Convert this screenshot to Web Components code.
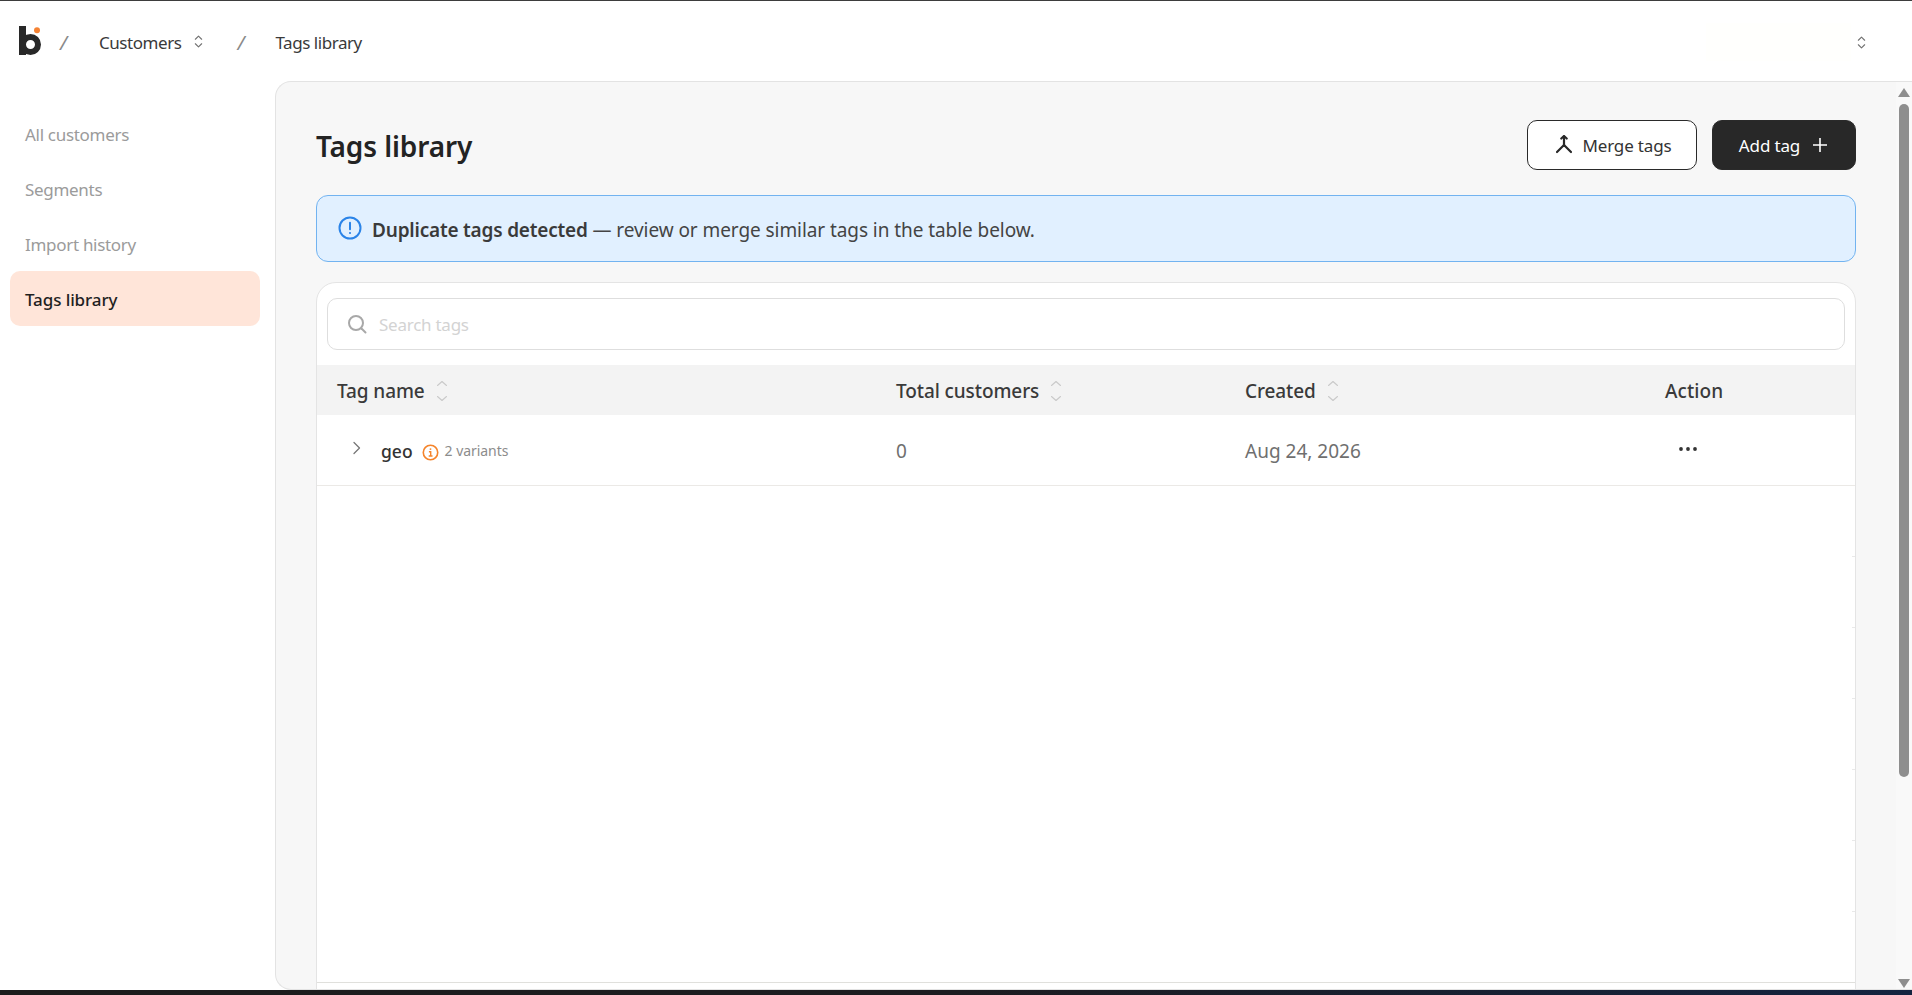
<!DOCTYPE html>
<html>
<head>
<meta charset="utf-8">
<title>Tags library</title>
<style>
html, body { margin: 0; height: 100%; overflow: hidden; background: #fff; }
body { font-family: "Noto Sans", "Open Sans", sans-serif; }
</style>
</head>
<body>
<app-shell>
  <top-bar slot="top"></top-bar>
  <side-nav slot="side">
    <nav-item>All customers</nav-item>
    <nav-item>Segments</nav-item>
    <nav-item>Import history</nav-item>
    <nav-item active>Tags library</nav-item>
  </side-nav>
  <page-panel slot="main" heading="Tags library">
    <action-button slot="actions" icon="merge" style="width:170px">Merge tags</action-button>
    <action-button slot="actions" icon="plus" dark style="width:144px">Add tag</action-button>
    <notice-banner><b>Duplicate tags detected</b> — review or merge similar tags in the table below.</notice-banner>
    <tag-table>
      <tag-row name="geo" variants="2 variants" total="0" created="Aug 24, 2026"></tag-row>
    </tag-table>
  </page-panel>
</app-shell>
<script>
const chevrons = (color) => `
<svg width="9" height="13" viewBox="0 0 10 14" fill="none" stroke="${color}" stroke-width="1.2" stroke-linecap="round" stroke-linejoin="round">
  <path d="M1.5 4.5 5 1l3.500 3.500"/><path d="M1.500 9.500 5 13l3.500-3.500"/>
</svg>`

class AppShell extends HTMLElement {
  connectedCallback() {
    const shadow = this.attachShadow({mode: 'open'})
    shadow.innerHTML = `
<style>
:host { display: flex; flex-direction: column; height: 995px; border-top: 1px solid #3d3d3d; box-sizing: border-box; }
.top { height: 80px; flex: none; }
.body { flex: 1; display: flex; min-height: 0; }
.bar { height: 5px; flex: none; background: linear-gradient(90deg, #1c1c1c, #1c1c20 50%, #14233f); }
</style>
<div class="top"><slot name="top"></slot></div>
<div class="body"><slot name="side"></slot><slot name="main"></slot></div>
<div class="bar"></div>`
  }
}

class TopBar extends HTMLElement {
  connectedCallback() {
    const shadow = this.attachShadow({mode: 'open'})
    shadow.innerHTML = `
<style>
:host { display: flex; align-items: center; height: 80px; padding: 2px 46px 0 19px; box-sizing: border-box; color: #3a3a3a; font-size: 17px; letter-spacing: -0.45px; }
.logo { display: block; margin-top: -3px; }
.sep { color: #8a8a8a; font-size: 20px; font-style: italic; width: 8px; }
.sep.a { margin-left: 18px; margin-right: 31px; }
.sep.b { margin-left: 34px; margin-right: 30px; }
.chev { display: flex; margin-left: 13px; margin-top: -1px; }
.grow { flex: 1; }
.box { width: 145px; height: 38px; background: #fffffd; margin-right: 6px; }
</style>
<svg class="logo" width="23" height="30" viewBox="0 0 23 30">
  <rect x="0" y="0" width="7" height="29" fill="#282828"/>
  <circle cx="11.500" cy="18.500" r="7.500" fill="none" stroke="#282828" stroke-width="6"/>
  <circle cx="18" cy="4.200" r="3" fill="#f58233"/>
</svg>
<span class="sep a">/</span>
<span>Customers</span>
<span class="chev">${chevrons('#707070')}</span>
<span class="sep b">/</span>
<span>Tags library</span>
<span class="grow"></span>
<span class="box"></span>
<span class="chev" style="margin-left:0;margin-top:0">${chevrons('#707070')}</span>`
  }
}

class SideNav extends HTMLElement {
  connectedCallback() {
    const shadow = this.attachShadow({mode: 'open'})
    shadow.innerHTML = `
<style>
:host { display: block; width: 275px; flex: none; padding: 25px 15px 0 10px; box-sizing: border-box; }
</style>
<slot></slot>`
  }
}

class NavItem extends HTMLElement {
  connectedCallback() {
    const shadow = this.attachShadow({mode: 'open'})
    shadow.innerHTML = `
<style>
:host { display: flex; align-items: center; height: 55px; box-sizing: border-box; padding: 2px 0 0 15px; border-radius: 10px; font-size: 17px; letter-spacing: -0.3px; color: #9b9b9b; }
:host([active]) { background: #ffe5d9; color: #1f1f1f; font-weight: 500; letter-spacing: -0.1px; }
</style>
<slot></slot>`
  }
}

class PagePanel extends HTMLElement {
  connectedCallback() {
    const shadow = this.attachShadow({mode: 'open'})
    shadow.innerHTML = `
<style>
:host { display: flex; flex: 1; min-width: 0; background: #f7f7f7; border: 1px solid #e3e3e3; border-right: 0; border-radius: 16px 0 0 16px; overflow: hidden; box-sizing: border-box; }
.content { flex: 1; min-width: 0; padding: 38px 40px 0 40px; }
.head { display: flex; align-items: center; height: 50px; }
h1 { flex: 1; margin: 0; padding-top: 2px; font-size: 28px; font-weight: 600; letter-spacing: -0.1px; color: #232323; }
.actions { display: flex; gap: 15px; }
::slotted(notice-banner) { margin-top: 25px; }
::slotted(tag-table) { margin-top: 20px; }
fake-scrollbar { flex: none; }
</style>
<div class="content">
  <div class="head">
    <h1>${this.getAttribute('heading')}</h1>
    <div class="actions"><slot name="actions"></slot></div>
  </div>
  <slot></slot>
</div>
<fake-scrollbar></fake-scrollbar>`
  }
}

class ActionButton extends HTMLElement {
  connectedCallback() {
    const shadow = this.attachShadow({mode: 'open'})
    const merge = `<svg width="18" height="20" viewBox="0 0 18 20" fill="none" stroke="#282828" stroke-width="2.200" stroke-linecap="round" stroke-linejoin="round">
  <path d="M6.300 3.500 9 1l2.700 2.500"/><path d="M9 1.500v9.500"/><path d="M2 18l7-7 7 7" transform="translate(0 -1)"/></svg>`
    const plus = `<svg width="14" height="14" viewBox="0 0 14 14" fill="none" stroke="#fff" stroke-width="1.600"><path d="M7 0v14M0 7h14"/></svg>`
    const icon = this.getAttribute('icon')
    shadow.innerHTML = `
<style>
:host { display: flex; align-items: center; justify-content: center; height: 50px; box-sizing: border-box; padding-left: 2.500px; border: 1px solid #2a2a2a; border-radius: 10px; background: #fff; color: #333; font-size: 17px; letter-spacing: -0.15px; gap: 9.500px; }
:host([dark]) { background: #282828; color: #fff; gap: 13px; padding: 0 2px 0 0; }
svg { display: block; }
</style>
${icon == 'merge' ? merge : ''}<slot></slot>${icon == 'plus' ? plus : ''}`
  }
}

class NoticeBanner extends HTMLElement {
  connectedCallback() {
    const shadow = this.attachShadow({mode: 'open'})
    shadow.innerHTML = `
<style>
:host { display: flex; align-items: center; height: 67px; box-sizing: border-box; padding: 2px 0 0 21px; gap: 10px; background: #e1f0ff; border: 1px solid #72b3f0; border-radius: 12px; color: #444; font-size: 19px; letter-spacing: -0.07px; }
::slotted(b) { font-weight: 600; letter-spacing: -0.2px; color: #3a3a3a; }
svg { flex: none; display: block; margin-top: -3px; }
</style>
<svg width="24" height="24" viewBox="0 0 24 24" fill="none" stroke="#2b84e8">
  <circle cx="12" cy="12" r="10.500" stroke-width="2"/>
  <path d="M12 6.800v6.400" stroke-width="2" stroke-linecap="round"/>
  <circle cx="12" cy="17" r="1.100" fill="#2b84e8" stroke="none"/>
</svg>
<span><slot></slot></span>`
  }
}

class TagTable extends HTMLElement {
  connectedCallback() {
    const shadow = this.attachShadow({mode: 'open'})
    shadow.innerHTML = `
<style>
:host { display: block; background: #fff; border: 1px solid #e4e4e4; border-radius: 20px 20px 0 0; box-sizing: border-box; height: 740px; }
.search { display: flex; align-items: center; gap: 12px; height: 52px; box-sizing: border-box; margin: 15px 10px; padding-left: 19px; border: 1px solid #dedede; border-radius: 10px; font-size: 17px; letter-spacing: -0.25px; color: #d3d3d3; }
.search svg { display: block; }
.cols { display: grid; grid-template-columns: 559px 349px 420px 1fr; align-items: center; padding-left: 20px; }
.head { height: 50px; box-sizing: border-box; padding-top: 2px; background: #f3f3f3; font-size: 19px; font-weight: 500; letter-spacing: -0.1px; color: #3a3a3a; }
.th { display: flex; align-items: center; gap: 11px; }
.th:last-child { letter-spacing: 0.1px; }
.sort { display: flex; }
.ticks { height: 496px; box-sizing: border-box; padding-top: 10px; background: linear-gradient(#e9e9e9 1px, transparent 1px) right 70px / 3px 71px repeat-y; background-origin: padding-box; background-clip: content-box; }
.foot { border-top: 1px solid #e0e0dc; height: 60px; }
</style>
<div class="search">
  <svg width="20" height="20" viewBox="0 0 20 20" fill="none" stroke="#a8a8a8" stroke-width="2" stroke-linecap="round">
    <circle cx="9" cy="9" r="7"/><path d="M14.500 14.500 18.500 18.500"/>
  </svg>
  <span>Search tags</span>
</div>
<div class="cols head">
  <div class="th">Tag name <span class="sort">${sortIcon()}</span></div>
  <div class="th">Total customers <span class="sort">${sortIcon()}</span></div>
  <div class="th">Created <span class="sort">${sortIcon()}</span></div>
  <div class="th">Action</div>
</div>
<slot></slot>
<div class="ticks"></div>
<div class="foot"></div>`
  }
}

function sortIcon() {
  return `<svg width="12" height="22" viewBox="0 0 12 22" fill="none" stroke="#c9c9c9" stroke-width="1.100" stroke-linecap="round" stroke-linejoin="round">
  <path d="M1.500 5.500 6 1.500l4.500 4"/><path d="M1.500 16.500 6 20.500l4.500-4"/></svg>`
}

class TagRow extends HTMLElement {
  connectedCallback() {
    const shadow = this.attachShadow({mode: 'open'})
    shadow.innerHTML = `
<style>
:host { display: grid; grid-template-columns: 559px 349px 420px 1fr; align-items: center; height: 71px; box-sizing: border-box; padding: 2px 0 0 20px; border-bottom: 1px solid #ebe9e6; font-size: 19px; color: #6f6f6f; }
.name { display: flex; align-items: center; }
.exp { display: block; margin: -7px 0 0 15px; }
.tag { margin-left: 20px; font-size: 17.500px; font-weight: 500; color: #333; }
.warn { display: block; margin: 2px 0 0 9px; }
.var { margin: -2px 0 0 6px; font-size: 14px; letter-spacing: -0.05px; color: #8c8c8c; }
.dots { display: block; margin: -5px 0 0 14px; }
</style>
<div class="name">
  <svg class="exp" width="9" height="14" viewBox="0 0 9 14" fill="none" stroke="#777" stroke-width="1.300" stroke-linecap="round" stroke-linejoin="round"><path d="M2 1.500 7.500 7 2 12.500"/></svg>
  <span class="tag">${this.getAttribute('name')}</span>
  <svg class="warn" width="17" height="17" viewBox="0 0 16 16" fill="none" stroke="#f5842b">
    <circle cx="8" cy="8" r="6.800" stroke-width="1.500"/>
    <path d="M6.500 7.300H8.200v4M6.300 11.300h3.600" stroke-width="1.300"/>
    <circle cx="8" cy="4.800" r=".9" fill="#f5842b" stroke="none"/>
  </svg>
  <span class="var">${this.getAttribute('variants')}</span>
</div>
<div>${this.getAttribute('total')}</div>
<div>${this.getAttribute('created')}</div>
<svg class="dots" width="18" height="4" viewBox="0 0 18 4" fill="#333"><circle cx="2" cy="2" r="1.900"/><circle cx="9" cy="2" r="1.900"/><circle cx="16" cy="2" r="1.900"/></svg>`
  }
}

class FakeScrollbar extends HTMLElement {
  connectedCallback() {
    const shadow = this.attachShadow({mode: 'open'})
    shadow.innerHTML = `
<style>
:host { display: flex; flex-direction: column; align-items: center; width: 16px; height: 100%; background: #f9f9f9; padding-top: 6px; padding-bottom: 1px; box-sizing: border-box; }
.thumb { width: 10px; height: 673px; margin-top: 7px; border-radius: 5px; background: #8e8e8e; flex: none; }
.grow { flex: 1; }
svg { display: block; flex: none; }
</style>
<svg width="12" height="9" viewBox="0 0 12 9" fill="#8e8e8e"><path d="M6 0l6 9H0z"/></svg>
<div class="thumb"></div>
<div class="grow"></div>
<svg width="12" height="9" viewBox="0 0 12 9" fill="#8e8e8e"><path d="M6 9 12 0H0z"/></svg>`
  }
}

customElements.define('fake-scrollbar', FakeScrollbar)
customElements.define('tag-row', TagRow)
customElements.define('tag-table', TagTable)
customElements.define('notice-banner', NoticeBanner)
customElements.define('action-button', ActionButton)
customElements.define('page-panel', PagePanel)
customElements.define('nav-item', NavItem)
customElements.define('side-nav', SideNav)
customElements.define('top-bar', TopBar)
customElements.define('app-shell', AppShell)
</script>
</body>
</html>
